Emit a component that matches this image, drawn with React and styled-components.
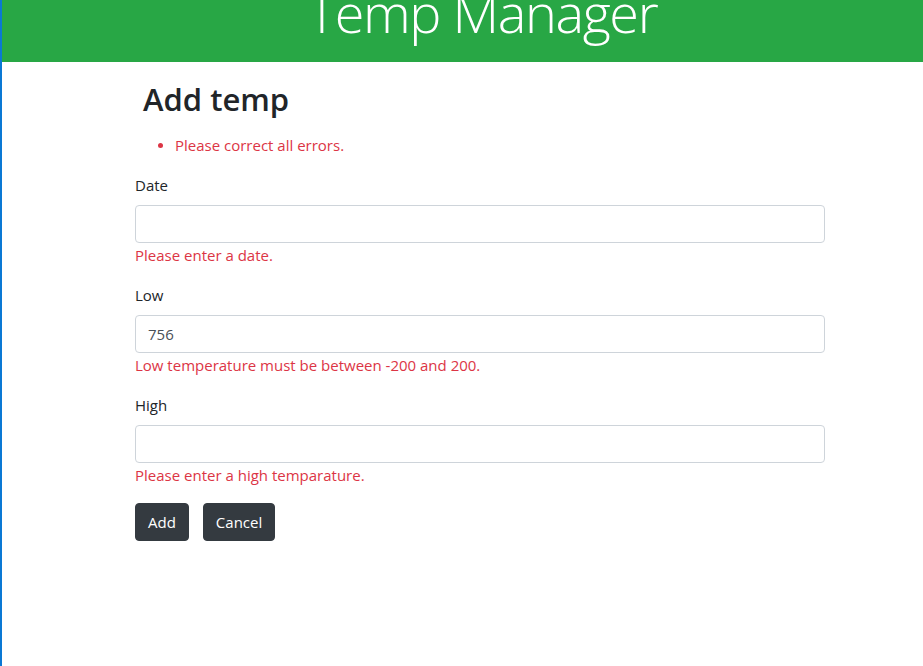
import React, { useState } from 'react';
import styled, { createGlobalStyle } from 'styled-components';

const GlobalStyle = createGlobalStyle`
  html, body {
    margin: 0;
    padding: 0;
    background: #fff;
  }
  body {
    font-family: "Open Sans", "Noto Sans", sans-serif;
    font-size: 15px;
    color: #212529;
  }
  * {
    box-sizing: border-box;
  }
`;

const Page = styled.div`
  min-height: 100vh;
  border-left: 2px solid #0a78d4;
`;

const Header = styled.header`
  height: 62px;
  background-color: #28a745;
  overflow: hidden;
  display: flex;
  justify-content: center;
  padding-left: 40px;
`;

const HeaderTitle = styled.h1`
  margin: -20px 0 0;
  color: #fff;
  font-size: 54px;
  font-weight: 300;
  line-height: 1.2;
  letter-spacing: -1.4px;
  white-space: nowrap;
`;

const Main = styled.main`
  width: 690px;
  margin-left: 133px;
  padding-top: 19px;
`;

const Title = styled.h2`
  margin: 0 0 15px 8px;
  font-size: 31px;
  font-weight: 600;
  line-height: 1.2;
  color: #212529;
`;

const ErrorList = styled.ul`
  margin: 0 0 16px;
  padding-left: 40px;
  color: #dc3545;
  line-height: 24px;

  li::marker {
    font-size: 14px;
  }
`;

const FormGroup = styled.div`
  margin-bottom: 16px;
`;

const Label = styled.label`
  display: block;
  line-height: 24px;
  margin-bottom: 8px;
`;

const Input = styled.input`
  display: block;
  width: 100%;
  height: 38px;
  padding: 6px 12px;
  border: 1px solid #ced4da;
  border-radius: 4px;
  font: inherit;
  color: #495057;
  background: #fff;
  outline: none;
`;

const Feedback = styled.div`
  color: #dc3545;
  line-height: 24px;
`;

const Actions = styled.div`
  display: flex;
  gap: 14px;
`;

const Button = styled.button`
  height: 38px;
  padding: 0 12px;
  border: 1px solid #343a40;
  border-radius: 4px;
  background-color: #343a40;
  color: #fff;
  font: inherit;
  cursor: pointer;
`;

function App() {
  const [low, setLow] = useState('756');

  return (
    <Page>
      <GlobalStyle />
      <Header>
        <HeaderTitle>Temp Manager</HeaderTitle>
      </Header>
      <Main>
        <Title>Add temp</Title>
        <ErrorList>
          <li>Please correct all errors.</li>
        </ErrorList>
        <FormGroup>
          <Label>Date</Label>
          <Input type="text" />
          <Feedback>Please enter a date.</Feedback>
        </FormGroup>
        <FormGroup>
          <Label>Low</Label>
          <Input type="text" value={low} onChange={(e) => setLow(e.target.value)} />
          <Feedback>Low temperature must be between -200 and 200.</Feedback>
        </FormGroup>
        <FormGroup>
          <Label>High</Label>
          <Input type="text" />
          <Feedback>Please enter a high temparature.</Feedback>
        </FormGroup>
        <Actions>
          <Button>Add</Button>
          <Button>Cancel</Button>
        </Actions>
      </Main>
    </Page>
  );
}

export default App;
